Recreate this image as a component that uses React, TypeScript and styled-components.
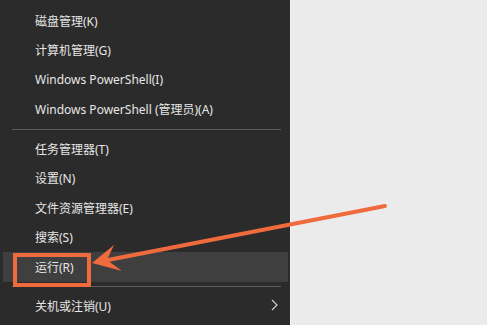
import React from 'react';
import styled, { createGlobalStyle } from 'styled-components';

const GlobalStyle = createGlobalStyle`
  html, body {
    margin: 0;
    padding: 0;
    background: #ebebeb;
  }
`;

type Entry = { label: string; divider?: boolean; active?: boolean; submenu?: boolean };

const entries: Entry[] = [
  { label: '磁盘管理(K)' },
  { label: '计算机管理(G)' },
  { label: 'Windows PowerShell(I)' },
  { label: 'Windows PowerShell (管理员)(A)' },
  { label: '', divider: true },
  { label: '任务管理器(T)' },
  { label: '设置(N)' },
  { label: '文件资源管理器(E)' },
  { label: '搜索(S)' },
  { label: '运行(R)', active: true },
  { label: '', divider: true },
  { label: '关机或注销(U)', submenu: true },
];

const App: React.FC = () => {
  return (
    <Screen>
      <GlobalStyle />
      <Menu>
        {entries.map((e, i) =>
          e.divider ? (
            <Divider key={i} />
          ) : (
            <Item key={i} $active={e.active}>
              <Label>{e.label}</Label>
              {e.submenu && (
                <Chevron viewBox="0 0 7 12" width="7" height="12">
                  <polyline points="1,1 6,6 1,11" fill="none" stroke="#cfcfcf" strokeWidth="1.2" />
                </Chevron>
              )}
            </Item>
          )
        )}
      </Menu>
      <Desktop />
      <Annotation viewBox="0 0 487 325" width="487" height="325">
        <rect x="15" y="255" width="74" height="30" fill="none" stroke="#ef6a3d" strokeWidth="4" />
        <line x1="108" y1="260" x2="385" y2="206" stroke="#ef6a3d" strokeWidth="4" strokeLinecap="round" />
        <polygon points="92,263 114,245 107,260 122,271" fill="#ef6a3d" />
      </Annotation>
    </Screen>
  );
};

const Screen = styled.div`
  position: relative;
  display: flex;
  width: 487px;
  height: 325px;
  overflow: hidden;
  background: #ebebeb;
`;

const Menu = styled.div`
  width: 290px;
  height: 325px;
  flex-shrink: 0;
  display: flex;
  flex-direction: column;
  padding: 6px 2px 0 3px;
  box-sizing: border-box;
  background: #2b2b2b;
`;

const Item = styled.div<{ $active?: boolean }>`
  height: 29.5px;
  flex-shrink: 0;
  display: flex;
  align-items: center;
  justify-content: space-between;
  padding: 0 10px 0 32px;
  background: ${({ $active }) => ($active ? '#3f3f3f' : 'transparent')};
`;

const Label = styled.span`
  font-family: 'Noto Sans', 'Noto Sans CJK SC', sans-serif;
  font-size: 12px;
  color: #e6e6e6;
  white-space: nowrap;
`;

const Chevron = styled.svg`
  display: block;
  margin-top: -3px;
`;

const Divider = styled.div`
  height: 10px;
  flex-shrink: 0;
  display: flex;
  align-items: center;
  padding: 0 7px 0 9px;

  &::after {
    content: '';
    flex: 1;
    height: 1px;
    background: #5c5c5c;
  }
`;

const Desktop = styled.div`
  flex: 1;
  background: #ebebeb;
  border-left: 1px solid #f4f4f4;
`;

const Annotation = styled.svg`
  position: absolute;
  left: 0;
  top: 0;
  pointer-events: none;
`;

export default App;
